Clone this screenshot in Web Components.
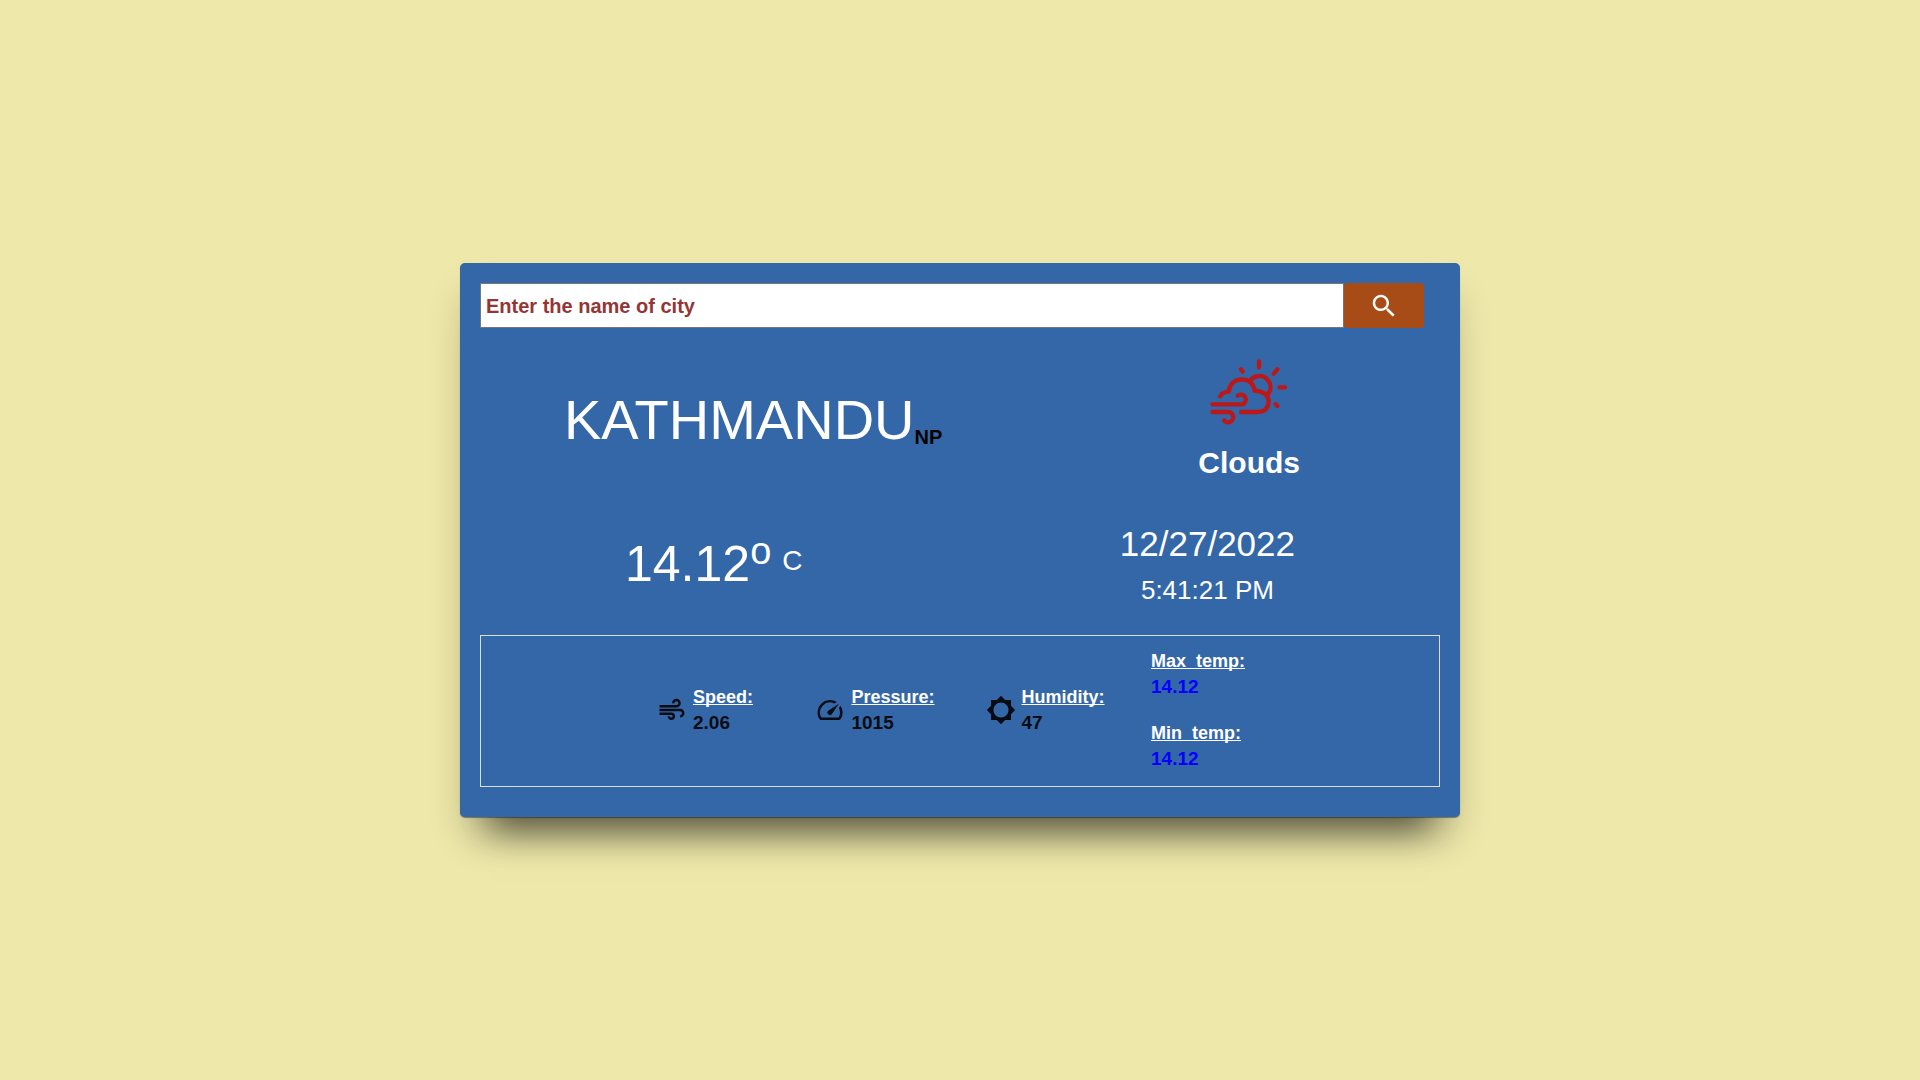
<!DOCTYPE html>
<html lang="en">
<head>
<meta charset="utf-8">
<meta name="viewport" content="width=device-width, initial-scale=1">
<title>Weather</title>
<style>
  body {
    margin: 0;
    min-height: 100vh;
    display: flex;
    align-items: center;
    justify-content: center;
    background: #eee8aa;
    font-family: "Liberation Sans", Arial, sans-serif;
    color: #fff;
  }
</style>
</head>
<body>
<weather-card>
  <city-search slot="search"></city-search>
  <city-title slot="place" country="NP">KATHMANDU</city-title>
  <sky-condition slot="sky">Clouds</sky-condition>
  <temp-now slot="temp">14.12</temp-now>
  <date-clock slot="clock" date="12/27/2022" time="5:41:21 PM"></date-clock>
  <weather-stat slot="stats" icon="wind" label="Speed:">2.06</weather-stat>
  <weather-stat slot="stats" icon="gauge" label="Pressure:">1015</weather-stat>
  <weather-stat slot="stats" icon="brightness" label="Humidity:">47</weather-stat>
  <temp-range slot="stats">
    <weather-stat label="Max_temp:">14.12</weather-stat>
    <weather-stat label="Min_temp:">14.12</weather-stat>
  </temp-range>
</weather-card>
<script>
  const ICONS = {
    wind: 'M14.5 17c0 1.65-1.35 3-3 3s-3-1.35-3-3h2c0 .55.45 1 1 1s1-.45 1-1-.45-1-1-1H2v-2h9.5c1.65 0 3 1.35 3 3zM19 6.5C19 4.57 17.43 3 15.5 3S12 4.57 12 6.5h2c0-.83.67-1.5 1.5-1.5s1.5.67 1.5 1.5S16.33 8 15.5 8H2v2h13.5c1.93 0 3.5-1.57 3.5-3.5zm-.5 4.5H2v2h16.5c.83 0 1.5.67 1.5 1.5s-.67 1.5-1.5 1.5v2c1.93 0 3.5-1.57 3.5-3.5S20.43 11 18.5 11z',
    gauge: 'm20.38 8.57-1.23 1.85a8 8 0 0 1-.22 7.58H5.07A8 8 0 0 1 15.58 6.85l1.85-1.23A10 10 0 0 0 3.35 19a2 2 0 0 0 1.72 1h13.85a2 2 0 0 0 1.74-1 10 10 0 0 0-.27-10.44zm-9.79 6.84a2 2 0 0 0 2.83 0l5.66-8.49-8.49 5.66a2 2 0 0 0 0 2.83z',
    brightness: 'M20 8.69V4h-4.69L12 .69 8.69 4H4v4.69L.69 12 4 15.31V20h4.69L12 23.31 15.31 20H20v-4.69L23.31 12 20 8.69zM12 18c-3.31 0-6-2.69-6-6s2.69-6 6-6 6 2.69 6 6-2.69 6-6 6z',
    search: 'M15.5 14h-.79l-.28-.27C15.41 12.59 16 11.11 16 9.5 16 5.91 13.09 3 9.5 3S3 5.91 3 9.5 5.91 16 9.5 16c1.61 0 3.09-.59 4.23-1.57l.27.28v.79l5 4.99L20.49 19l-4.99-5zm-6 0C7.01 14 5 11.99 5 9.5S7.01 5 9.5 5 14 7.01 14 9.5 11.99 14 9.5 14z'
  };
  const icon = name => `<svg viewBox="0 0 24 24" width="30" height="30" fill="currentColor" aria-hidden="true"><path d="${ICONS[name]}"/></svg>`;

  const define = (tag, render) => customElements.define(tag, class extends HTMLElement {
    constructor() {
      super();
      this.attachShadow({ mode: 'open' });
    }
    connectedCallback() {
      this.shadowRoot.innerHTML = render(this);
    }
  });

  define('weather-card', () => `
    <style>
      :host {
        display: block;
        box-sizing: border-box;
        width: 100%;
        max-width: 1000px;
        padding: 20px 20px 30px;
        border-radius: 5px;
        background: #3467a8;
        box-shadow: 0 1px 1px rgba(0,0,0,.4), 0 44px 34px -30px rgba(0,0,0,.55), 0 24px 36px -6px rgba(0,0,0,.2);
      }
      .row { display: flex; align-items: center; justify-content: space-between; }
      .place { margin-top: 31px; padding: 0 140px 0 84px; }
      .now { margin-top: 38px; padding: 0 145px; }
      .stats {
        display: grid;
        grid-template-columns: repeat(4, 170px);
        justify-content: center;
        justify-items: center;
        align-items: center;
        margin-top: 26px;
        padding: 12px 0 14px;
        border: 1px solid #ddd;
      }
    </style>
    <slot name="search"></slot>
    <section class="row place"><slot name="place"></slot><slot name="sky"></slot></section>
    <section class="row now"><slot name="temp"></slot><slot name="clock"></slot></section>
    <section class="stats"><slot name="stats"></slot></section>`);

  define('city-search', () => `
    <style>
      :host { display: block; padding-right: 16px; }
      form { display: flex; height: 45px; margin: 0; }
      input {
        flex: 1;
        min-width: 0;
        box-sizing: border-box;
        margin: 0;
        padding: 1px 5px 0;
        border: 1px solid #767676;
        border-radius: 0;
        background: #fff;
        color: #943634;
        font: bold 20px "Liberation Sans", Arial, sans-serif;
      }
      input::placeholder { color: #943634; opacity: 1; }
      button {
        display: flex;
        align-items: center;
        justify-content: center;
        width: 80px;
        padding: 0;
        border: 0;
        border-radius: 4px;
        background: #a74c17;
        color: #fff;
        cursor: pointer;
      }
    </style>
    <form onsubmit="return false">
      <input type="text" placeholder="Enter the name of city" aria-label="City name">
      <button type="submit" aria-label="Search">${icon('search')}</button>
    </form>`);

  define('city-title', host => `
    <style>
      :host { display: block; padding-bottom: 2px; }
      h1 { margin: 0; font-size: 56px; font-weight: 400; line-height: 64px; }
      sub { color: #000; font-size: 20px; font-weight: 700; line-height: 0; vertical-align: -5px; }
    </style>
    <h1><slot></slot><sub>${host.getAttribute('country')}</sub></h1>`);

  define('sky-condition', () => `
    <style>
      :host { display: flex; flex-direction: column; align-items: center; gap: 18px; }
      svg { display: block; }
      h2 { margin: 0; font-size: 30px; line-height: 40px; }
    </style>
    <svg viewBox="90 86 234 198" width="78" height="66" fill="none" stroke="#bb1919" stroke-width="13" stroke-linecap="round" aria-hidden="true">
      <path d="M97 222H187A15 15 0 1 0 173 196"/>
      <path d="M97 245H143A15.500 15.500 0 1 1 132 270"/>
      <path stroke-linecap="butt" d="M118 203Q125 184 146 183Q152 147 187 147Q219 149 224 181Q265 184 266 214Q264 244 234 245H178"/>
      <path stroke-linecap="butt" d="M211 150C224 134 247 133 260 145C275 160 275 179 262 194"/>
      <path d="M237 93V111M281 130L292 117M298 171H315M287 222L292 227M183 117L188 124"/>
    </svg>
    <h2><slot></slot></h2>`);

  define('temp-now', () => `
    <style>
      :host { display: block; font-size: 50px; line-height: 52px; padding-bottom: 2px; }
      sup { line-height: 0; }
      .degree { font-size: 38px; vertical-align: 17px; }
      .unit { margin-left: 11px; font-size: 28px; vertical-align: 11px; }
    </style>
    <slot></slot><sup class="degree">o</sup><sup class="unit">C</sup>`);

  define('date-clock', host => `
    <style>
      :host { display: flex; flex-direction: column; align-items: center; gap: 4px; }
      .date { font-size: 35px; line-height: 46px; }
      .time { font-size: 26px; line-height: 38px; }
    </style>
    <time class="date">${host.getAttribute('date')}</time>
    <time class="time">${host.getAttribute('time')}</time>`);

  define('weather-stat', host => `
    <style>
      :host { display: flex; align-items: center; gap: 6px; color: var(--stat-value, #080c12); font-size: 18px; font-weight: 700; line-height: 26px; }
      svg { display: block; }
      dl, dd { margin: 0; }
      dt {
        color: #fff;
        text-decoration: underline 1px;
        text-decoration-skip-ink: none;
        text-underline-offset: 1px;
      }
      dd { font-size: 19px; }
    </style>
    ${host.hasAttribute('icon') ? icon(host.getAttribute('icon')) : ''}
    <dl><dt>${host.getAttribute('label')}</dt><dd><slot></slot></dd></dl>`);

  define('temp-range', () => `
    <style>
      :host { display: flex; flex-direction: column; gap: 20px; width: 128px; --stat-value: #00f; }
    </style>
    <slot></slot>`);
</script>
</body>
</html>
